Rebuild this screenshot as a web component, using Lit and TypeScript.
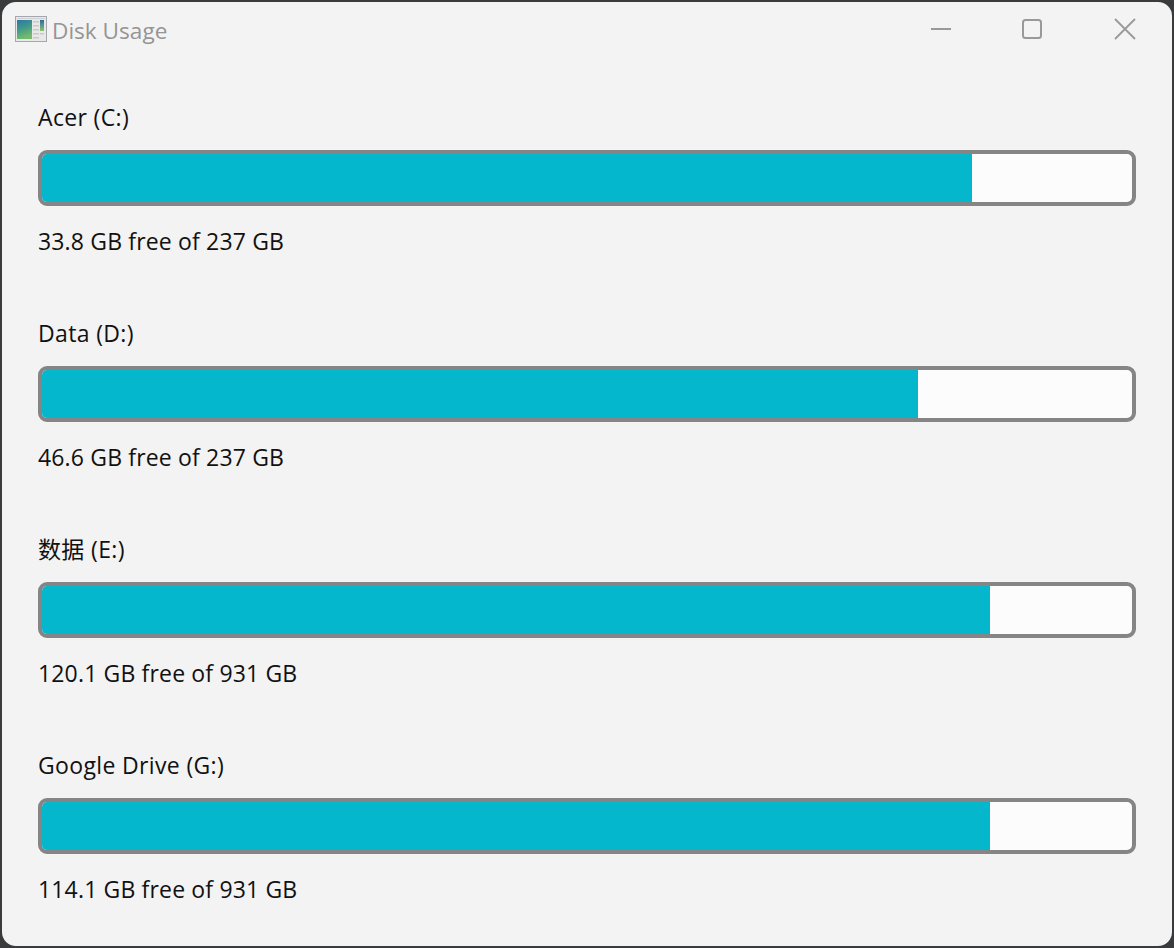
import { LitElement, html, css } from "lit";
import { customElement } from "lit/decorators.js";

const drives = [
  { name: "Acer (C:)", free: "33.8 GB free of 237 GB", used: 930 },
  { name: "Data (D:)", free: "46.6 GB free of 237 GB", used: 876 },
  { name: "数据 (E:)", free: "120.1 GB free of 931 GB", used: 948 },
  { name: "Google Drive (G:)", free: "114.1 GB free of 931 GB", used: 948 },
];

@customElement("app-root")
export class AppRoot extends LitElement {
  static styles = css`
    :host {
      display: block;
      width: 1174px;
      height: 948px;
      background: #3a3b3d;
      font-family: "Open Sans", "Noto Sans CJK SC", sans-serif;
    }
    .window {
      box-sizing: border-box;
      height: 948px;
      margin: 0;
      border: 2px solid #3a3b3d;
      border-radius: 16px;
      background: #f3f3f3;
      overflow: hidden;
    }
    .titlebar {
      display: flex;
      align-items: center;
      height: 58px;
      padding-left: 13px;
    }
    .app-icon {
      width: 32px;
      height: 26px;
      display: block;
      flex: none;
      margin-bottom: 5px;
    }
    .title {
      margin-left: 5px;
      font-size: 22.6px;
      color: #959595;
      line-height: 32px;
    }
    .controls {
      margin-left: auto;
      margin-bottom: 4px;
      display: flex;
      align-items: center;
      padding-right: 36px;
      gap: 70px;
    }
    .controls svg {
      display: block;
      width: 22px;
      height: 22px;
    }
    .content {
      display: flex;
      flex-direction: column;
      gap: 62px;
      padding: 42px 36px 0;
    }
    .drive {
      display: flex;
      flex-direction: column;
    }
    .label {
      font-size: 23px;
      letter-spacing: 0.16px;
      line-height: 30px;
      color: #111;
    }
    .name {
      letter-spacing: 0.35px;
    }
    .bar {
      box-sizing: border-box;
      height: 56px;
      margin: 18px 0 20px;
      border: 4px solid #858585;
      border-radius: 9px;
      background: #fcfcfc;
      overflow: hidden;
    }
    .fill {
      height: 100%;
      background: #04b7cd;
    }
  `;

  render() {
    return html`
      <div class="window">
        <div class="titlebar">
          <svg class="app-icon" viewBox="0 0 32 26">
            <defs>
              <linearGradient id="g" x1="0" y1="0" x2="0.3" y2="1">
                <stop offset="0" stop-color="#2f75a8" />
                <stop offset="0.5" stop-color="#3f9a88" />
                <stop offset="1" stop-color="#75ba6e" />
              </linearGradient>
              <linearGradient id="h" x1="0" y1="0" x2="0" y2="1">
                <stop offset="0" stop-color="#2c6c9f" />
                <stop offset="1" stop-color="#8cc46c" />
              </linearGradient>
            </defs>
            <rect x="0.5" y="0.5" width="31" height="25" fill="#e8e8e8" stroke="#a4a8ac" />
            <rect x="2" y="4" width="15" height="19" fill="url(#g)" />
            <rect x="25" y="4" width="4" height="11" fill="url(#h)" />
            <g fill="#c9c9c9">
              <rect x="18" y="5" width="6" height="1.5" />
              <rect x="18" y="9" width="6" height="1.5" />
              <rect x="18" y="13" width="6" height="1.5" />
              <rect x="18" y="17" width="6" height="1.5" />
              <rect x="18" y="21" width="6" height="1.5" />
              <rect x="25" y="17" width="4" height="1.5" />
            </g>
            <rect x="2" y="2" width="28" height="1" fill="#cfd2d4" />
          </svg>
          <span class="title">Disk Usage</span>
          <div class="controls">
            <svg viewBox="0 0 22 22"><path d="M1 11h20" stroke="#999" stroke-width="2" fill="none" /></svg>
            <svg viewBox="0 0 22 22"><rect x="1" y="2" width="18" height="18" rx="2.5" stroke="#999" stroke-width="2" fill="none" /></svg>
            <svg viewBox="0 0 22 22"><path d="M1 1l20 20M21 1L1 21" stroke="#999" stroke-width="1.8" fill="none" /></svg>
          </div>
        </div>
        <div class="content">
          ${drives.map(
            (d) => html`
              <div class="drive">
                <div class="label name">${d.name}</div>
                <div class="bar"><div class="fill" style="width:${d.used}px"></div></div>
                <div class="label">${d.free}</div>
              </div>
            `
          )}
        </div>
      </div>
    `;
  }
}
